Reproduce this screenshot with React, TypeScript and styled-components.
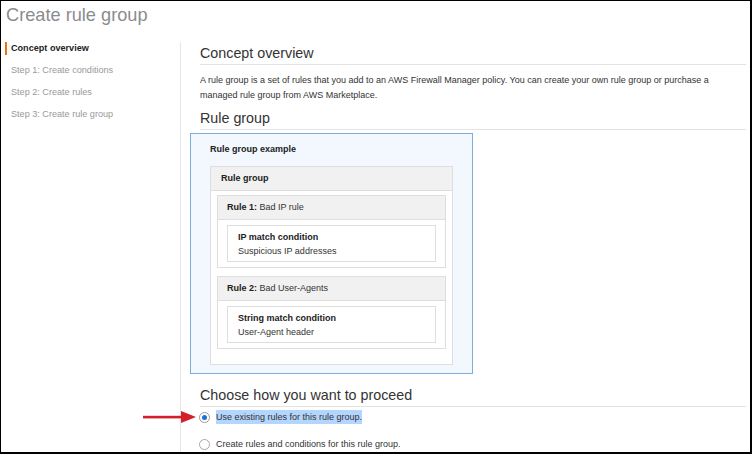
import React from "react";
import styled, { createGlobalStyle } from "styled-components";

const Global = createGlobalStyle`
  html, body { margin: 0; padding: 0; background: #fff; }
  body { font-family: "Liberation Sans", Arial, Helvetica, sans-serif; }
  * { box-sizing: border-box; }
`;

const Page = styled.div`
  position: relative;
  width: 752px;
  height: 454px;
  overflow: hidden;
  border-style: solid;
  border-color: #000;
  border-width: 1px 2px 2px 1px;
  display: flex;
  flex-direction: column;
  background: #fff;
  color: #333;
  font-size: 9px;
`;

const Title = styled.h1`
  margin: 0;
  height: 41px;
  flex: none;
  padding: 1px 0 0 5px;
  font-size: 18.2px;
  line-height: 26px;
  font-weight: 400;
  color: #8c8c8c;
`;

const Body = styled.div`
  flex: 1;
  display: flex;
  min-height: 0;
`;

const Sidebar = styled.nav`
  width: 180px;
  flex: none;
  border-right: 1px solid #e6e6e6;
  display: flex;
  flex-direction: column;
  gap: 9px;
`;

const NavItem = styled.div<{ $active?: boolean }>`
  margin-left: 4px;
  height: 13px;
  line-height: 13px;
  padding-left: 4px;
  border-left: 2px solid ${(p) => (p.$active ? "#ec7211" : "transparent")};
  color: ${(p) => (p.$active ? "#222" : "#999")};
  font-weight: ${(p) => (p.$active ? 700 : 400)};
  font-size: 9.1px;
`;

const Main = styled.main`
  flex: 1;
  min-width: 0;
  padding: 2px 4px 0 19px;
  display: flex;
  flex-direction: column;
  & > * { flex-shrink: 0; }
`;

const Heading = styled.h2<{ $mt?: number }>`
  margin: ${(p) => p.$mt ?? 0}px 0 0 0;
  font-size: 14.3px;
  line-height: 18px;
  font-weight: 400;
  color: #333;
  padding-bottom: 2px;
  border-bottom: 1px solid #e3e3e3;
`;

const Para = styled.p`
  margin: 8px 0 0 0;
  font-size: 9px;
  line-height: 15px;
  color: #333;
  white-space: nowrap;
`;

const ExampleBox = styled.section`
  margin: 3px 0 0 -10px;
  width: 283px;
  height: 241px;
  border: 1px solid #7aaee0;
  background: #f2f8fe;
  padding: 8px 19px 0 19px;
`;

const ExampleLabel = styled.div`
  font-weight: 700;
  font-size: 9px;
  line-height: 14px;
  color: #222;
`;

const Group = styled.div`
  margin-top: 10px;
  border: 1px solid #dedede;
  background: #fff;
`;

const GroupHeader = styled.div`
  height: 24px;
  line-height: 23px;
  padding-left: 10px;
  background: #f1f1f1;
  border-bottom: 1px solid #dedede;
  font-weight: 700;
  color: #222;
`;

const GroupBody = styled.div`
  padding: 4px 6px 15px 6px;
  display: flex;
  flex-direction: column;
  gap: 8px;
`;

const Rule = styled.div`
  border: 1px solid #dedede;
  background: #fff;
  padding-bottom: 5px;
`;

const RuleHeader = styled.div`
  height: 24px;
  line-height: 23px;
  padding-left: 9px;
  background: #f1f1f1;
  border-bottom: 1px solid #dedede;
  color: #333;
  b { color: #222; }
`;

const Condition = styled.div`
  margin: 5px 9px 0 9px;
  border: 1px solid #dedede;
  background: #fff;
  height: 37px;
  padding: 4px 0 0 10px;
  line-height: 14px;
`;

const CondTitle = styled.div`
  font-weight: 700;
  color: #222;
`;

const CondSub = styled.div`
  color: #333;
`;

const RadioRow = styled.label<{ $mt?: number }>`
  display: flex;
  align-items: center;
  height: 20px;
  margin-top: ${(p) => p.$mt ?? 0}px;
  margin-left: -1px;
  gap: 6px;
  font-size: 9px;
  color: #333;
`;

const Radio = styled.span<{ $checked?: boolean }>`
  width: 11px;
  height: 11px;
  border-radius: 50%;
  border: 1px solid ${(p) => (p.$checked ? "#9a9a9a" : "#a8a8a8")};
  background: #fff;
  display: flex;
  align-items: center;
  justify-content: center;
  flex: none;
  &::after {
    content: "";
    width: 5px;
    height: 5px;
    border-radius: 50%;
    background: ${(p) => (p.$checked ? "#1b6fd6" : "transparent")};
  }
`;

const Selected = styled.span`
  background: #b4d5fe;
  padding: 2px 0;
`;

const Arrow = styled.svg`
  position: absolute;
  left: 142px;
  top: 409px;
`;

export default function App() {
  return (
    <>
      <Global />
      <Page>
        <Title>Create rule group</Title>
        <Body>
          <Sidebar>
            <NavItem $active>Concept overview</NavItem>
            <NavItem>Step 1: Create conditions</NavItem>
            <NavItem>Step 2: Create rules</NavItem>
            <NavItem>Step 3: Create rule group</NavItem>
          </Sidebar>
          <Main>
            <Heading>Concept overview</Heading>
            <Para>
              A rule group is a set of rules that you add to an AWS Firewall Manager policy. You can create your own
              rule group or purchase a<br />
              managed rule group from AWS Marketplace.
            </Para>
            <Heading $mt={6}>Rule group</Heading>
            <ExampleBox>
              <ExampleLabel>Rule group example</ExampleLabel>
              <Group>
                <GroupHeader>Rule group</GroupHeader>
                <GroupBody>
                  <Rule>
                    <RuleHeader>
                      <b>Rule 1:</b> Bad IP rule
                    </RuleHeader>
                    <Condition>
                      <CondTitle>IP match condition</CondTitle>
                      <CondSub>Suspicious IP addresses</CondSub>
                    </Condition>
                  </Rule>
                  <Rule>
                    <RuleHeader>
                      <b>Rule 2:</b> Bad User-Agents
                    </RuleHeader>
                    <Condition>
                      <CondTitle>String match condition</CondTitle>
                      <CondSub>User-Agent header</CondSub>
                    </Condition>
                  </Rule>
                </GroupBody>
              </Group>
            </ExampleBox>
            <Heading $mt={12}>Choose how you want to proceed</Heading>
            <RadioRow>
              <Radio $checked />
              <Selected>Use existing rules for this rule group.</Selected>
            </RadioRow>
            <RadioRow $mt={7}>
              <Radio />
              <span>Create rules and conditions for this rule group.</span>
            </RadioRow>
          </Main>
        </Body>
        <Arrow width="54" height="14" viewBox="0 0 54 14">
          <rect x="0" y="5.8" width="42" height="2.6" fill="#d3202b" />
          <polygon points="38,1 53,7 38,13" fill="#d3202b" />
        </Arrow>
      </Page>
    </>
  );
}
